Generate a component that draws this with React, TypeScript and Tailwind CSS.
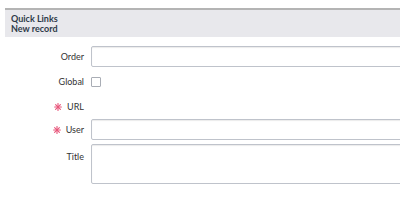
import React from 'react';

const Req = () => (
  <svg width="8" height="8" viewBox="0 0 8 8" className="mr-[5px] shrink-0" stroke="#e8557a" strokeWidth="1.1" strokeLinecap="round">
    <line x1="4" y1="0.6" x2="4" y2="7.4" />
    <line x1="0.6" y1="4" x2="7.4" y2="4" />
    <line x1="1.6" y1="1.6" x2="6.4" y2="6.4" />
    <line x1="6.4" y1="1.6" x2="1.6" y2="6.4" />
  </svg>
);

export default function App() {
  return (
    <div className="w-[400px] h-[211px] overflow-hidden bg-white pt-[8px] pl-[5px] font-['Lato',sans-serif]">
      {/* header */}
      <div className="border-t-2 border-[#b4b4b4] bg-[#e8e8ec] h-[29px] px-[6px] pt-[4px] text-[9px] font-bold leading-[10px] text-[#2e3a48]">
        <div>Quick Links</div>
        <div>New record</div>
      </div>

      {/* form */}
      <div className="flex flex-col text-[9px] text-[#333]">
        <div className="flex items-center gap-[7px] mt-[9px] h-[21px]">
          <label className="w-[79px] text-right shrink-0">Order</label>
          <input className="w-[340px] shrink-0 h-[21px] rounded-[2px] border border-[#bfc3cb] shadow-[inset_0_1px_1px_rgba(0,0,0,0.08)] bg-white" />
        </div>
        <div className="flex items-center gap-[7px] mt-[5px] h-[20px]">
          <label className="w-[79px] text-right shrink-0">Global</label>
          <span className="w-[10px] h-[10px] rounded-[1px] border border-[#a9adb5] bg-white" />
        </div>
        <div className="flex items-center gap-[7px] mt-[5px] h-[20px]">
          <label className="w-[79px] text-right shrink-0 flex items-center justify-end">
            <Req />
            URL
          </label>
        </div>
        <div className="flex items-center gap-[7px] mt-[2px] h-[21px]">
          <label className="w-[79px] text-right shrink-0 flex items-center justify-end">
            <Req />
            User
          </label>
          <input className="w-[340px] shrink-0 h-[21px] rounded-[2px] border border-[#bfc3cb] shadow-[inset_0_1px_1px_rgba(0,0,0,0.08)] bg-white" />
        </div>
        <div className="flex items-start gap-[7px] mt-[4px]">
          <label className="w-[79px] text-right shrink-0 pt-[6px]">Title</label>
          <textarea className="w-[340px] shrink-0 h-[40px] rounded-[2px] border border-[#bfc3cb] shadow-[inset_0_1px_1px_rgba(0,0,0,0.08)] bg-white resize-none" />
        </div>
      </div>
    </div>
  );
}
